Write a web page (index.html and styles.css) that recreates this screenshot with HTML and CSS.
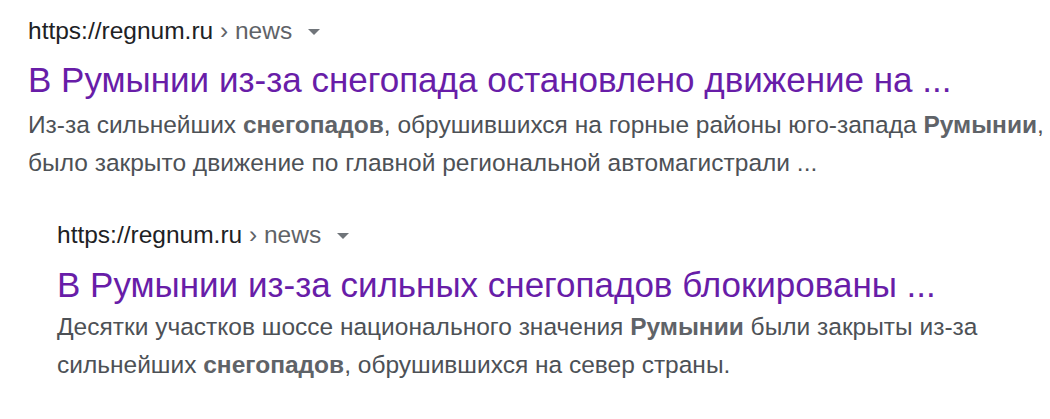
FILE: index.html
```html
<!DOCTYPE html>
<html lang="ru">
<head>
<meta charset="utf-8">
<link rel="stylesheet" href="styles.css">
</head>
<body>
<div class="page">
  <div class="result">
    <div class="cite"><span class="host">https://regnum.ru</span><span class="crumb"> › news</span><span class="caret"></span></div>
    <a class="title" href="#">В Румынии из-за снегопада остановлено движение на ...</a>
    <div class="snippet">Из-за сильнейших <b>снегопадов</b>, обрушившихся на горные районы юго-запада <b>Румынии</b>, было закрыто движение по главной региональной автомагистрали ...</div>
  </div>
  <div class="result nested">
    <div class="cite"><span class="host">https://regnum.ru</span><span class="crumb"> › news</span><span class="caret"></span></div>
    <a class="title" href="#">В Румынии из-за сильных снегопадов блокированы ...</a>
    <div class="snippet">Десятки участков шоссе национального значения <b>Румынии</b> были закрыты из-за сильнейших <b>снегопадов</b>, обрушившихся на север страны.</div>
  </div>
</div>
</body>
</html>
```
FILE: styles.css
```css
html, body { margin: 0; padding: 0; background: #fff; }
body { font-family: "Liberation Sans", Arial, sans-serif; }
.page { padding: 15px 0 0 28px; width: 1050px; box-sizing: border-box; }
.result { display: flex; flex-direction: column; }
.nested { margin-left: 29px; margin-top: 37px; }
.cite { font-size: 24.5px; line-height: 32px; height: 32px; color: #202124; display: flex; align-items: center; }
.crumb { color: #5f6368; white-space: pre; }
.caret { width: 0; height: 0; border-left: 6px solid transparent; border-right: 6px solid transparent; border-top: 6px solid #70757a; margin-left: 16px; margin-top: 2px; }
.title { font-size: 35px; line-height: 44px; color: #681da8; text-decoration: none; margin-top: 11px; }
.nested .title { margin-top: 12.5px; }
.snippet { font-size: 24.5px; line-height: 38px; color: #4d5156; margin-top: 3.5px; }
.nested .snippet { margin-top: 0.5px; }
.snippet b { color: #5f6368; }
```
